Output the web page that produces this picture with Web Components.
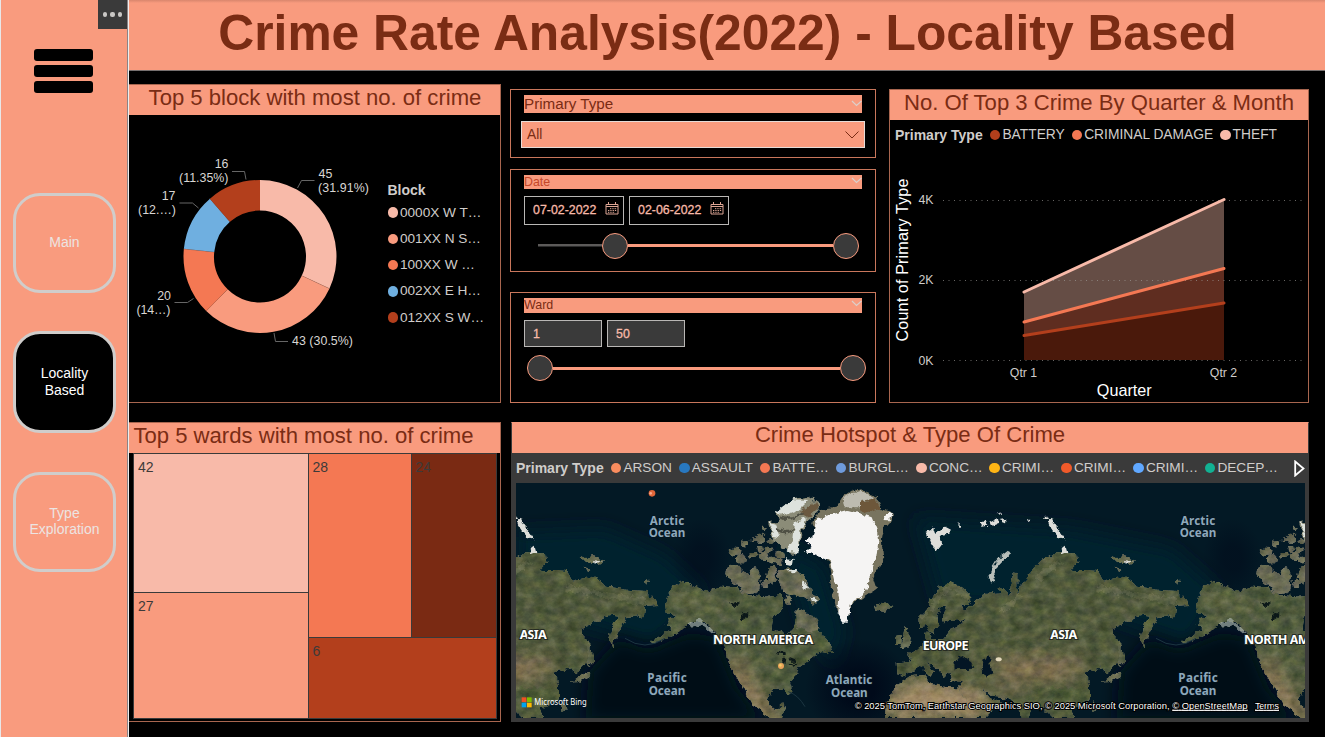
<!DOCTYPE html>
<html lang="en">
<head>
<meta charset="utf-8">
<title>Crime Rate Analysis</title>
<style>
html,body{margin:0;height:100%;overflow:hidden;background:#000}
body{font-family:"Liberation Sans",Arial,sans-serif;--salmon:#f99b7e;--ink:#7a2c14}
</style>
</head>
<body>
<crime-dashboard></crime-dashboard>
<script>
const define = (name, html) => customElements.define(name, class extends HTMLElement {
  constructor() {
    super();
    const t = document.createElement('template');
    t.innerHTML = typeof html === 'function' ? html(this) : html;
    this.attachShadow({mode: 'open'}).appendChild(t.content.cloneNode(true));
  }
});

/* Navigation button */
define('nav-button', `
<style>
:host{display:flex;box-sizing:border-box;width:103px;height:100px;border:3px solid #d0cdcb;border-radius:27px;align-items:center;justify-content:center;text-align:center;color:#ece4e2;font-size:14px;line-height:16px;padding:0 12px 2px}
:host([active]){background:#000;color:#fff;height:102px;line-height:17px;padding-bottom:0}
</style><slot></slot>`);

/* Sidebar */
define('side-bar', `
<style>
:host{display:flex;flex-direction:column;position:relative;box-sizing:border-box;width:129px;height:737px;background:var(--salmon);border-left:1px solid #e8e8ea;border-right:1px solid #eee;padding-left:12px}
.burger{width:59px;height:44px;margin:49px 0 100px 20.500px;display:flex;flex-direction:column;justify-content:space-between}
.burger i{height:12px;background:#000;border-radius:3px}
.more{position:absolute;right:1px;top:0;width:29px;height:29px;background:#3a3a3a;display:flex;align-items:center;justify-content:center;gap:3.6px}
.more i{width:4.2px;height:4.2px;border-radius:50%;background:#c9c7c5}
nav{display:flex;flex-direction:column}
nav-button:nth-child(2){margin:38px 0 39px}
.edge{position:absolute;right:0;top:0;width:1px;height:737px;background:#8b8385}
</style>
<div class="edge"></div>
<div class="more"><i></i><i></i><i></i></div>
<div class="burger"><i></i><i></i><i></i></div>
<nav><nav-button>Main</nav-button><nav-button active>Locality Based</nav-button><nav-button>Type Exploration</nav-button></nav>`);

/* Titled visual */
define('visual-panel', `
<style>
:host{display:flex;flex-direction:column;box-sizing:border-box;border:1px solid #a8664f;background:#000;overflow:hidden}
h2{margin:0;flex:none;height:30px;background:var(--salmon);color:var(--ink);font-weight:400;font-size:22.1px;line-height:var(--lh,26px);text-align:center;white-space:nowrap}
</style><h2><slot name="title"></slot></h2><slot></slot>`);

/* Colour dot and text */
define('legend-item', el => `
<style>
:host{display:flex;align-items:center;gap:2px;color:#d0cdcb;font-size:13.65px;line-height:16px;white-space:nowrap}
i{width:10.4px;height:10.4px;border-radius:50%;background:${el.getAttribute('color')}}
</style><i></i><span><slot></slot></span>`);

/* Donut chart */
const slices = [[45,'#f8baa9'],[43,'#f99b7e'],[20,'#f47853'],[17,'#6fafe0'],[16,'#b33f1c']];
const at = (r, n) => { const a = n / 141 * Math.PI * 2; return `${(260 + r * Math.sin(a)).toFixed(2)} ${(256.5 - r * Math.cos(a)).toFixed(2)}`; };
let run = 0;
const ring = slices.map(([n,c]) => {
  const a = run, b = run += n;
  return `<path d="M${at(76.5,a)}A76.5 76.5 0 0 1 ${at(76.5,b)}L${at(46,b)}A46 46 0 0 0 ${at(46,a)}Z" fill="${c}"/>`
    + (b < 141 ? `<path d="M${at(46,b)}L${at(76.5,b)}" stroke="#9a5e4c" stroke-width=".7"/>` : '');
}).join('');
define('donut-chart', `
<style>
:host{display:flex;position:relative;height:287px}
svg{display:block;flex:none}
text{font-size:12.4px;fill:#d9d6d4}
.legend{position:absolute;left:258.500px;top:67px;display:flex;flex-direction:column}
b{color:#d0cdcb;font-size:14px;line-height:16px;margin-bottom:1.5px}
legend-item{height:26.25px}
</style>
<svg width="371" height="287" viewBox="129 115 371 287">
${ring}
<g fill="none" stroke="#666" stroke-width="1"><path d="M297.5 188l4-7.500h13M274 333l1.500 8.500h12.500M174.500 302.500h13l6-4M179.500 203h13l6 5M232 171.500h12.500l1.500 8"/></g>
<text x="318.500" y="178">45</text><text x="318" y="192" textLength="51">(31.91%)</text>
<text x="292" y="345" textLength="61">43 (30.5%)</text>
<text x="171" y="300" text-anchor="end">20</text><text x="136.500" y="314" textLength="34">(14…)</text>
<text x="175.500" y="200" text-anchor="end">17</text><text x="138" y="214" textLength="38">(12.…)</text>
<text x="228.500" y="168" text-anchor="end">16</text><text x="179" y="182" textLength="49.500">(11.35%)</text>
</svg>
<div class="legend"><b>Block</b>
<legend-item color="#f8baa9">0000X W T…</legend-item><legend-item color="#f99b7e">001XX N S…</legend-item><legend-item color="#f47853">100XX W …</legend-item><legend-item color="#6fafe0">002XX E H…</legend-item><legend-item color="#b33f1c">012XX S W…</legend-item></div>`);

/* Treemap */
define('tree-map', `
<style>
:host{display:flex;gap:1px;width:362px;height:264px;margin-left:4px;padding:1px;background:#3a3a3a;color:#3d3a39;font-size:14px;line-height:16px}
div{box-sizing:border-box}
.c{display:flex;flex-direction:column;gap:1px}
.r{display:flex;gap:1px;height:183px}
.t{padding:5px 4px}
</style>
<div class="c" style="width:173.500px"><div class="t" style="height:137.500px;background:#f8baa9">42</div><div class="t" style="flex:1;background:#f99b7e">27</div></div>
<div class="c" style="flex:1"><div class="r"><div class="t" style="width:102px;background:#f47853">28</div><div class="t" style="flex:1;background:#7a2a13">24</div></div><div class="t" style="flex:1;background:#b33f1c">6</div></div>`);

/* Slicer frame */
define('slicer-box', `
<style>
:host{display:block;box-sizing:border-box;border:1px solid #c9775c;padding:0 13px;background:#000}
header{display:flex;justify-content:space-between;background:var(--salmon);color:var(--head,var(--ink));width:338px;height:var(--h,14px);font-size:var(--fs,12.4px);line-height:var(--h,14px);margin-top:5px}
svg{display:block;margin-top:var(--cy,0px)}
</style><header><slot name="title"></slot><svg width="11" height="10" viewBox="0 0 11 10"><path d="M1 3l4.500 4.500L10.500 3" fill="none" stroke="#dccfca" stroke-width="1.200"/></svg></header><slot></slot>`);

define('drop-down', `
<style>
:host{display:flex;box-sizing:border-box;width:344px;height:27px;margin:8px 0 0 -3px;border:1px solid #e6dcd8;background:var(--salmon);color:var(--ink);font-size:13.800px;align-items:center;justify-content:space-between;padding:0 5px}
</style><span><slot></slot></span><svg width="14" height="9" viewBox="0 0 14 9"><path d="M.5 1.500L7 8l6.500-6.500" fill="none" stroke="#7a2c14"/></svg>`);

define('value-box', el => `
<style>
:host{display:flex;box-sizing:border-box;border:1px solid #b9b7b5;color:#f8baa9;align-items:center;justify-content:space-between;padding:0 4px 0 8px;font-size:12.400px;-webkit-text-stroke:.3px #f8baa9;white-space:nowrap;${el.hasAttribute('date')?'width:100px;height:29px;':'width:78px;height:27px;background:#3a3a3a;'}}
svg{margin-top:-3px}
</style><slot></slot>${el.hasAttribute('date')?`<svg width="14" height="13" viewBox="0 0 14 13" fill="none" stroke="#dda594"><path d="M1 2.500h12v9.500H1zM1 4.500h12M3.500 0v2.500M10.500 0v2.500"/><path d="M5 6.700h7M3 8.500h9M3 10.300h7" stroke-dasharray="1.300 1"/></svg>`:''}`);

define('range-slider', el => `
<style>
:host{display:flex;align-items:center;height:26px}
div,i{flex:none}
.off{height:2px;border-bottom:1px solid #2b2b2b;background:#5c5a59;width:${el.getAttribute('off')}px}
.on{height:3px;background:var(--salmon);width:${el.getAttribute('on')}px}
i{box-sizing:border-box;width:26px;height:26px;border-radius:50%;border:1.500px solid var(--salmon);background:#3a3a3a}
</style><div class="off"></div><i></i><div class="on"></div><i></i>`);

/* Area chart */
define('area-chart', `
<style>
:host{display:flex;flex-direction:column;height:282px}
.legend{display:flex;align-items:center;height:30px;padding-left:5px;gap:7px}
b{color:#d0cdcb;font-size:14px;width:88px;white-space:nowrap}
legend-item{font-size:13.800px}
svg{display:block}
text{font-size:12.300px;fill:#d0cdcb}.ax{font-size:16.200px;fill:#fff}
</style>
<div class="legend"><b>Primary Type</b><legend-item color="#b33f1c">BATTERY</legend-item><legend-item color="#f47853">CRIMINAL DAMAGE</legend-item><legend-item color="#f8baa9">THEFT</legend-item></div>
<svg width="417" height="252" viewBox="890 150 417 252">
<path d="M1024 292L1224 199.500V268.500L1024 322Z" fill="#654d45"/><path d="M1024 322L1224 268.500V303L1024 335.500Z" fill="#5f2d20"/><path d="M1024 335.500L1224 303V360H1024Z" fill="#4a190b"/>
<g stroke="#a09c99" stroke-opacity=".65" stroke-dasharray="1 4.500"><path d="M943 200.500h360M943 280.500h360M943 360.500h360"/></g>
<g stroke-width="3" stroke-linecap="round"><path d="M1024 292L1224 199.500" stroke="#f8baa9"/><path d="M1024 322L1224 268.500" stroke="#f47853"/><path d="M1024 335.500L1224 303" stroke="#b33f1c"/></g>
<text x="918.500" y="204">4K</text><text x="918.500" y="284">2K</text><text x="918.500" y="365">0K</text>
<text x="1023.500" y="377" text-anchor="middle">Qtr 1</text><text x="1223.500" y="377" text-anchor="middle">Qtr 2</text>
<text class="ax" x="1124.300" y="396" text-anchor="middle">Quarter</text>
<text class="ax" transform="translate(908 341.500) rotate(-90)" textLength="163">Count of Primary Type</text>
</svg>`);

/* Satellite map. Land is drawn once per continent group and repeated every 1593 units. */
const isles = [[105,215,16,12],[125,235,17,12],[135,190,12,9],[180,175,15,14],[192,230,16,13],[205,210,12,10],[160,225,12,9],[215,240,15,10],[240,225,14,10],[235,245,12,9],[100,275,24,23],[130,300,30,22],[150,320,32,22],[165,290,14,28],[215,285,15,27],[195,310,11,14],[180,205,10,7],[210,185,10,7],[160,180,8,6],[192,145,6,5],[265,358,11,14]]
  .map(([x,y,a,b]) => `<ellipse cx="${x}" cy="${y}" rx="${a}" ry="${b}"/>`).join('');
define('world-map', `
<style>
:host{display:block;width:789px;height:235px;margin:0 0 0 4px}
svg{display:block}
.o{font:700 35px "Noto Sans","Open Sans",sans-serif;fill:#8ea8bb;paint-order:stroke;stroke:#06141f;stroke-width:4px}
.c{font:700 38px "Noto Sans","Open Sans",sans-serif;fill:#fff;paint-order:stroke;stroke:#262b22;stroke-width:6px}
.k{font:28.500px "Liberation Sans",sans-serif;fill:#fff;paint-order:stroke;stroke:#000;stroke-width:6px}
.u{text-decoration:underline}
.b{font:28px "Noto Sans","Open Sans",sans-serif;fill:#fff}
</style>
<svg width="789" height="235" viewBox="33 204 2367 705">
<defs>
<filter id="land" x="-5%" y="-5%" width="110%" height="110%" color-interpolation-filters="sRGB">
<feTurbulence type="fractalNoise" baseFrequency=".055" numOctaves="3" seed="4" result="n"/>
<feDisplacementMap in="SourceGraphic" in2="n" scale="20" xChannelSelector="R" yChannelSelector="G" result="d"/>
<feTurbulence type="fractalNoise" baseFrequency=".03 .04" numOctaves="6" seed="9"/>
<feColorMatrix values=".6 0 0 0 .19 .5 .1 0 0 .19 .4 0 .2 0 .17 0 0 0 0 1"/>
<feComposite in2="d" operator="in" result="t"/>
<feBlend in="t" in2="d" mode="soft-light"/>
</filter>
<filter id="rough" x="-10%" y="-10%" width="120%" height="120%" color-interpolation-filters="sRGB"><feTurbulence type="fractalNoise" baseFrequency=".05" numOctaves="3" seed="2"/><feDisplacementMap in="SourceGraphic" scale="20" xChannelSelector="R" yChannelSelector="G"/></filter>
<filter id="soft" x="-50%" y="-50%" width="200%" height="200%"><feGaussianBlur stdDeviation="26"/></filter>
<path id="ea" d="M-38 775L-40 745 2 742-5 718 22 702 45 682 42 650 58 650 62 672 100 672 118 650 125 640 160 625 165 612 125 618 120 612 100 625 95 610 108 590 105 570 92 575 82 600 85 630 70 655 55 645 50 635 28 640 25 608 50 585 65 550 90 515 125 503 160 522 185 550 175 572 150 565 165 590 195 560 210 545 240 535 272 532 262 515 285 525 300 540 305 475 322 478 322 540 335 500 355 490 365 465 395 435 440 412 500 412 505 440 482 465 530 465 565 468 578 500 600 495 625 482 660 492 680 515 750 525 802 528 838 570 798 572 795 600 740 610 715 660 700 695 688 670 700 630 720 605 690 600 640 628 610 640 608 662 635 690 632 735 600 768 588 778 575 760 555 765 528 768 540 815 540 850 505 875 480 880 495 909H430L400 880 370 870 355 909H340L320 865 290 850 245 845 218 820 240 850 270 860 225 909H205L155 830 150 812 160 800 125 798 115 775 100 785 85 765 50 740 72 775 60 782 30 755-5 775-20 785ZM-75 909L-72 865-40 810 0 783 45 780 55 805 100 815 150 818 160 840 195 890 200 909Z"/>
<path id="eb" d="M-28 690L-15 635 2 665-2 700-25 705ZM-45 665l18-5-2 25-16 3ZM575 803L600 785 630 770 634 780 600 800ZM628 675L642 740 628 752ZM605 430l35-10 35 17-35 12ZM612 455l24 8-8 8ZM792 495l18 3-6 8-14-2ZM-108 570l33-8 22 15-24 14-27-8ZM550 850l12 30-12 15Z"/>
<g id="warm" filter="url(#soft)"><path d="M220 735L350 725 520 730 510 780 400 800 300 790Z" fill="#867356"/><path d="M-70 830L40 795 200 820 250 870 220 909H-70Z" fill="#a28b6b"/><path d="M240 790l100 30-50 20Z" fill="#8a755b"/></g>
<clipPath id="ce"><use href="#ea"/></clipPath>
<path id="na" d="M480 570L500 518 525 500 570 512 610 530 650 515 690 520 730 540 790 545 830 540 835 575 805 610 800 640 850 660 865 640 872 600 890 590 930 610 945 650 975 685 982 715 950 708 920 730 885 755 870 782 855 800 862 830 850 840 836 820 800 828 788 855 800 878 820 880 835 865 840 880 830 909H800L740 870 700 795 672 745 662 695 630 650 595 620 555 622 520 655 445 685 435 680 505 640 482 625 510 600 485 590Z"/>
<clipPath id="cn"><use href="#na"/></clipPath>
<g id="europe"><g filter="url(#land)"><use href="#ea" fill="#515a3e"/><use href="#eb" fill="#62684e"/><g clip-path="url(#ce)"><use href="#warm"/><path d="M30 610L125 510 180 550M280 590L330 540M380 490l70-50M560 520L800 560" stroke="#74775b" stroke-width="18" fill="none" opacity=".5" filter="url(#rough)"/><path d="M400 830L520 850" stroke="#4d5c38" stroke-width="60" filter="url(#soft)"/></g></g>
<g fill="#031524" filter="url(#rough)"><path d="M130 747l18-24 35 18 10 20-62 2ZM218 728l22-8 2 25 5 30-20 10-12-28Z"/></g>
<g fill="#dededa" filter="url(#rough)"><path d="M50 350l20-8 8 12 25-20 20 10-10 15-25 5 8 20-18 25-12-20ZM410 318l16-8 8 20 14 18 20 28-18-5-18-20ZM452 400l18-8 5 18-18 8ZM205 320l22 0 5 12-18 3ZM238 320l24-12 4 18-22 8ZM258 293l12-4 3 12ZM268 318l22-4-2 12ZM140 330l10-2v8ZM352 314h6v6h-6ZM403 305h7v7h-7ZM645 435l16 2 4 7-14-2Z"/><path d="M300 410Q255 440 242 485L250 503" fill="none" stroke="#b8bfba" stroke-width="12"/></g><ellipse cx="266" cy="733" rx="9" ry="6" fill="#e4d9bd"/></g>
<g id="america"><g filter="url(#land)"><use href="#na" fill="#515c40"/><g clip-path="url(#cn)"><path d="M680 740L740 850 810 909" stroke="#927d5d" stroke-width="60" fill="none" filter="url(#soft)"/><path d="M500 560q50-30 130 20" stroke="#6c704c" stroke-width="35" fill="none" filter="url(#soft)"/></g><g transform="translate(585 195)" fill="#6a6b57">${isles}<path d="M235 270L290 268 325 315 358 360 345 375 305 350 250 335 235 300ZM290 380L340 410 360 450 330 455 290 440Z"/></g></g>
<g transform="translate(585 195)" filter="url(#rough)"><path d="M230 100L280 58 325 48 360 72 350 100 325 118 310 150 300 190 282 225 250 205 220 182 207 130 238 125Z" fill="#8b8c78"/><path d="M230 95L280 58 330 60 300 90 250 108ZM285 125l35-10-20 45-5 60-35-5 20-40ZM212 130l18 5 8 40-18-5ZM255 235l26 2-2 18-24-3ZM302 300l24 22-12 8ZM333 345l24 20-15 5ZM260 270l34 0-3 14Z" fill="#dde2dd"/><path d="M240 112q40 15 80-22M225 140q30 30 55 5" stroke="#4f5044" stroke-width="7" fill="none"/><path d="M300 95l45-30 10 20-30 25Z" fill="#6a5940"/><path d="M360 88L410 80 430 45 480 28 530 50 545 85 580 98 575 118 552 142 545 180 550 240 532 270 520 300 528 325 490 350 455 375 440 420 410 395 398 340 388 260 380 235 340 130Z" fill="#78745f"/><path d="M430 50l50-18 45 22-45 10 10 18-55 0Z" fill="#bdbbb0"/><path d="M480 65l45-10 15 30-35 15-25-15Z" fill="#6d573a"/><path d="M352 115L440 90 480 100 515 112 530 150 535 185 528 240 510 280 506 318 490 345 455 370 440 425 430 425 412 398 415 350 400 290 388 240 345 225 315 215 332 200 312 185 342 165ZM550 120l18-25 12 6-15 20Z" fill="#f5f4f3"/></g>
<path d="M548 628l40-16 18 16 28 28-14-4-30-24-30 10Z" fill="#adb7b1" opacity=".65" filter="url(#rough)"/>
<g fill="#0b1718" filter="url(#rough)"><path d="M675 566l17-8 10 6-16 12ZM704 604l26-14 4 8-26 18ZM812 716l20-8 15 12-24 0ZM832 725l12 0-3 24-9-4ZM850 726l22 8-12 8ZM850 748l25-8-12 12Z"/></g></g>
<radialGradient id="deep"><stop offset=".3" stop-color="#000a1a"/><stop offset="1" stop-color="#000a1a" stop-opacity="0"/></radialGradient>
</defs>
<rect x="33" y="204" width="2367" height="705" fill="#031925"/>
<g filter="url(#soft)"><path d="M33 350L300 340 480 420 600 530 450 690 200 620 33 500ZM1230 310L1700 340 2000 400 2150 530 2050 690 1800 600 1300 560ZM830 380L960 450 1020 650 990 760 900 640Z" fill="#04212d"/></g>
<g filter="url(#soft)" fill="#010817"><path d="M250 770L340 670 430 705 560 650 640 670 700 820 780 920H240ZM1843 770L1933 670 2023 705 2153 650 2233 670 2293 820 2373 920H1833Z"/></g>
<g fill="url(#deep)"><ellipse cx="590" cy="430" rx="90" ry="120" opacity=".5"/><ellipse cx="2183" cy="430" rx="90" ry="120" opacity=".5"/><ellipse cx="1060" cy="820" rx="160" ry="150"/></g>
<use href="#america"/><use href="#europe" x="1215"/><use href="#europe" x="-378"/><use href="#america" x="1593"/>
<g fill="none" stroke="#1c3541" stroke-width="3"><path d="M360 670q60 40 120 0M1953 670q60 40 120 0"/><path d="M850 830q30 10 50 45"/></g>
<g class="o"><text x="434" y="329" textLength="104">Arctic</text><text x="431" y="367" textLength="110">Ocean</text><text x="427" y="802" textLength="118">Pacific</text><text x="431" y="840" textLength="110">Ocean</text><text x="962" y="808" textLength="140">Atlantic</text><text x="978" y="846" textLength="110">Ocean</text><text x="2027" y="329" textLength="104">Arctic</text><text x="2024" y="367" textLength="110">Ocean</text><text x="2020" y="802" textLength="118">Pacific</text><text x="2024" y="840" textLength="110">Ocean</text></g>
<g class="c"><text x="44" y="673" textLength="81">ASIA</text><text x="624" y="686" textLength="301">NORTH AMERICA</text><text x="1253" y="704" textLength="138">EUROPE</text><text x="1636" y="673" textLength="81">ASIA</text><text x="2217" y="686" textLength="301">NORTH AMERICA</text></g>
<circle cx="441" cy="235" r="10" fill="#e0673a"/><circle cx="437" cy="235" r="4" fill="#f7a98d"/>
<circle cx="828" cy="753" r="9" fill="#e9a35a"/><circle cx="826" cy="751" r="4" fill="#f5cd65"/>
<path d="M50 847h14v14H50z" fill="#f25022"/><path d="M66 847h14v14H66z" fill="#7fba00"/><path d="M50 863h14v14H50z" fill="#00a4ef"/><path d="M66 863h14v14H66z" fill="#ffb900"/>
<text class="b" x="88" y="871" textLength="157" lengthAdjust="spacingAndGlyphs">Microsoft Bing</text>
<text class="k" x="1049" y="881" textLength="945">© 2025 TomTom, Earthstar Geographics SIO, © 2025 Microsoft Corporation,</text>
<text class="k u" x="2002" y="881" textLength="226">© OpenStreetMap</text><text class="k u" x="2250" y="881" textLength="72">Terms</text>
<path d="M2002 886h226M2250 886h72" stroke="#fff" stroke-width="3"/>
</svg>`);

define('map-legend', `
<style>
:host{display:flex;align-items:center;height:30px;padding-left:4px;flex:none}
b{color:#d0cdcb;font-size:14px;width:95px;white-space:nowrap}
svg{margin-left:auto;margin-right:3px}
</style><b>Primary Type</b>
<legend-item style="width:68.300px" color="#f98c5e">ARSON</legend-item><legend-item style="width:80.700px" color="#2878c0">ASSAULT</legend-item><legend-item style="width:76px" color="#f47853">BATTE…</legend-item><legend-item style="width:80.500px" color="#6f9bdc">BURGL…</legend-item><legend-item style="width:73px" color="#f8baa9">CONC…</legend-item><legend-item style="width:72px" color="#ffb515">CRIMI…</legend-item><legend-item style="width:72px" color="#f15a2a">CRIMI…</legend-item><legend-item style="width:71.500px" color="#60a8ff">CRIMI…</legend-item><legend-item color="#12b193">DECEP…</legend-item>
<svg width="11" height="17" viewBox="0 0 11 17"><path d="M1.200 1.500v14L9.500 8.500Z" fill="none" stroke="#fff" stroke-width="1.800"/></svg>`);

/* Page */
define('crime-dashboard', `
<style>
:host{display:flex;width:1325px;height:737px;background:#000}
main{width:1196px;display:flex;flex-direction:column}
h1{margin:0;box-sizing:border-box;height:71px;border-bottom:1px solid #77706f;background:linear-gradient(#d9866d,var(--salmon) 3px);color:var(--ink);font-size:49.750px;line-height:64px;text-align:center;white-space:nowrap;padding:1px 0 0 1px}
.grid{display:flex;gap:9px}
.left{width:373px;margin-left:-1px;padding-top:13px;display:flex;flex-direction:column;gap:19px}
.right{display:flex;flex-direction:column}
.top{display:flex;gap:13px;padding-top:18px;height:314px}
.mid{width:366px;display:flex;flex-direction:column}
.vals{display:flex}
</style>
<side-bar></side-bar>
<main>
<h1>Crime Rate Analysis(2022) - Locality Based</h1>
<div class="grid">
<div class="left">
<visual-panel style="height:319px"><span slot="title" style="margin-left:1px">Top 5 block with most no. of crime</span><donut-chart></donut-chart></visual-panel>
<visual-panel style="height:300px"><span slot="title" style="margin-right:22px">Top 5 wards with most no. of crime</span><tree-map></tree-map></visual-panel>
</div>
<div class="right">
<div class="top">
<div class="mid">
<slicer-box style="height:69px;--h:18px;--fs:15.200px;--cy:3px"><span slot="title">Primary Type</span><drop-down>All</drop-down></slicer-box>
<slicer-box style="height:104px;margin-top:11px;--head:#c4482a"><span slot="title">Date</span><div class="vals" style="gap:5px;margin-top:7px"><value-box date>07-02-2022</value-box><value-box date>02-06-2022</value-box></div><range-slider style="margin:8px 0 0 14px" off="64" on="205"></range-slider></slicer-box>
<slicer-box style="height:111px;margin-top:20px;--h:14.500px"><span slot="title">Ward</span><div class="vals" style="gap:5px;margin-top:7.500px"><value-box>1</value-box><value-box>50</value-box></div><range-slider style="margin:8px 0 0 3px" off="0" on="287"></range-slider></slicer-box>
</div>
<visual-panel style="width:420px"><span slot="title">No. Of Top 3 Crime By Quarter &amp; Month</span><area-chart></area-chart></visual-panel>
</div>
<visual-panel style="width:798px;height:300px;margin:19px 0 0 1px;background:#3a3a3a;border-color:#3a3a3a;border-top-color:#f99b7e;--lh:24.500px"><span slot="title">Crime Hotspot &amp; Type Of Crime</span><map-legend></map-legend><world-map></world-map></visual-panel>
</div>
</div>
</main>`);
</script>
</body>
</html>
